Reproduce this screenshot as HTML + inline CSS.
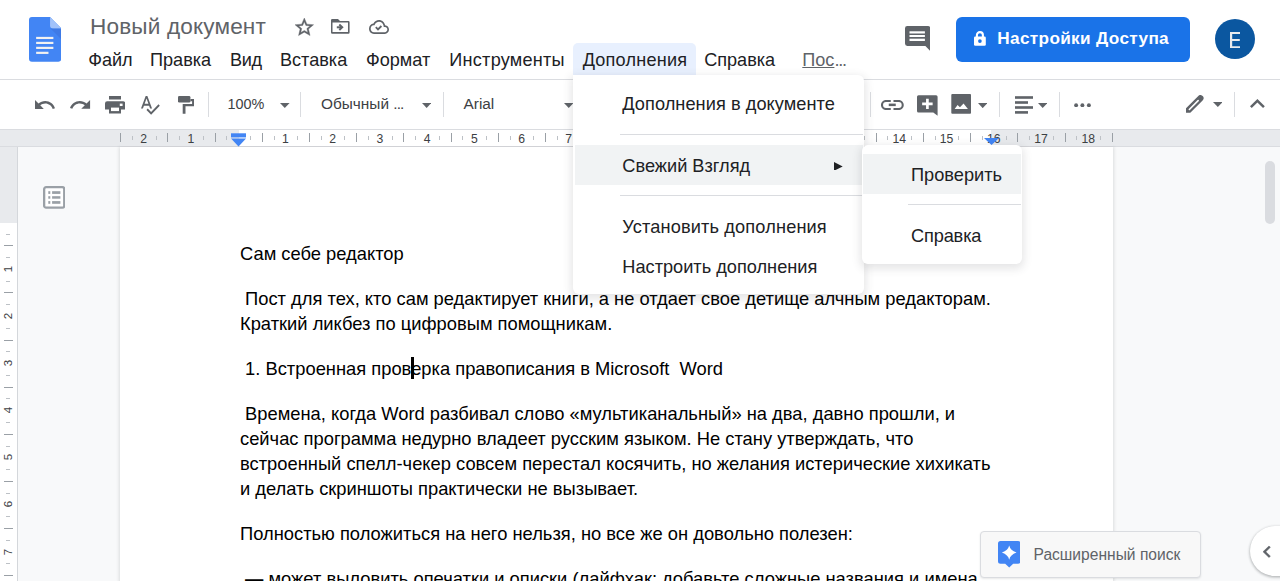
<!DOCTYPE html>
<html><head><meta charset="utf-8"><style>
html,body{margin:0;padding:0;width:1280px;height:581px;overflow:hidden;background:#fff;position:relative;font-family:"Liberation Sans",sans-serif}
</style></head><body>
<div style="position:absolute;left:0px;top:0px;width:1280px;height:79px;background:#fff;"></div>
<div style="position:absolute;left:0px;top:79px;width:1280px;height:1px;background:#dadce0;"></div>
<div style="position:absolute;left:0px;top:80px;width:1280px;height:49px;background:#fff;"></div>
<div style="position:absolute;left:0px;top:129px;width:1280px;height:1px;background:#dadce0;"></div>
<div style="position:absolute;left:0px;top:130px;width:1280px;height:16px;background:#e8eaed;"></div>
<div style="position:absolute;left:0px;top:146px;width:1280px;height:1px;background:#dadce0;"></div>
<div style="position:absolute;left:0px;top:147px;width:1280px;height:434px;background:#f8f9fa;"></div>
<div style="position:absolute;left:0px;top:147px;width:17px;height:76px;background:#e8eaed;"></div>
<div style="position:absolute;left:0px;top:223px;width:17px;height:358px;background:#fff;"></div>
<div style="position:absolute;left:17px;top:147px;width:1px;height:434px;background:#d4d7db;"></div>
<div style="position:absolute;left:120px;top:147px;width:993px;height:434px;background:#fff;box-shadow:0 1px 3px 1px rgba(60,64,67,.15)"></div>
<div style="position:absolute;left:120px;top:130px;width:119px;height:16px;background:#e8eaed;"></div>
<div style="position:absolute;left:239px;top:130px;width:752px;height:16px;background:#fff;"></div>
<div style="position:absolute;left:991px;top:130px;width:122px;height:16px;background:#e8eaed;"></div>
<div style="position:absolute;left:120px;top:133px;width:1px;height:9px;background:#9aa0a6;"></div>
<div style="position:absolute;left:132px;top:136px;width:1px;height:4px;background:#bdc1c6;"></div>
<div style="position:absolute;left:128.76px;top:132.3px;width:30px;text-align:center;font:400 12.2px/14px 'Liberation Sans',sans-serif;color:#3c4043">2</div>
<div style="position:absolute;left:156px;top:136px;width:1px;height:4px;background:#bdc1c6;"></div>
<div style="position:absolute;left:167px;top:133px;width:1px;height:9px;background:#9aa0a6;"></div>
<div style="position:absolute;left:179px;top:136px;width:1px;height:4px;background:#bdc1c6;"></div>
<div style="position:absolute;left:175.98px;top:132.3px;width:30px;text-align:center;font:400 12.2px/14px 'Liberation Sans',sans-serif;color:#3c4043">1</div>
<div style="position:absolute;left:203px;top:136px;width:1px;height:4px;background:#bdc1c6;"></div>
<div style="position:absolute;left:215px;top:133px;width:1px;height:9px;background:#9aa0a6;"></div>
<div style="position:absolute;left:226px;top:136px;width:1px;height:4px;background:#bdc1c6;"></div>
<div style="position:absolute;left:250px;top:136px;width:1px;height:4px;background:#bdc1c6;"></div>
<div style="position:absolute;left:262px;top:133px;width:1px;height:9px;background:#9aa0a6;"></div>
<div style="position:absolute;left:274px;top:136px;width:1px;height:4px;background:#bdc1c6;"></div>
<div style="position:absolute;left:270.42px;top:132.3px;width:30px;text-align:center;font:400 12.2px/14px 'Liberation Sans',sans-serif;color:#3c4043">1</div>
<div style="position:absolute;left:297px;top:136px;width:1px;height:4px;background:#bdc1c6;"></div>
<div style="position:absolute;left:309px;top:133px;width:1px;height:9px;background:#9aa0a6;"></div>
<div style="position:absolute;left:321px;top:136px;width:1px;height:4px;background:#bdc1c6;"></div>
<div style="position:absolute;left:317.64px;top:132.3px;width:30px;text-align:center;font:400 12.2px/14px 'Liberation Sans',sans-serif;color:#3c4043">2</div>
<div style="position:absolute;left:344px;top:136px;width:1px;height:4px;background:#bdc1c6;"></div>
<div style="position:absolute;left:356px;top:133px;width:1px;height:9px;background:#9aa0a6;"></div>
<div style="position:absolute;left:368px;top:136px;width:1px;height:4px;background:#bdc1c6;"></div>
<div style="position:absolute;left:364.86px;top:132.3px;width:30px;text-align:center;font:400 12.2px/14px 'Liberation Sans',sans-serif;color:#3c4043">3</div>
<div style="position:absolute;left:392px;top:136px;width:1px;height:4px;background:#bdc1c6;"></div>
<div style="position:absolute;left:403px;top:133px;width:1px;height:9px;background:#9aa0a6;"></div>
<div style="position:absolute;left:415px;top:136px;width:1px;height:4px;background:#bdc1c6;"></div>
<div style="position:absolute;left:412.08px;top:132.3px;width:30px;text-align:center;font:400 12.2px/14px 'Liberation Sans',sans-serif;color:#3c4043">4</div>
<div style="position:absolute;left:439px;top:136px;width:1px;height:4px;background:#bdc1c6;"></div>
<div style="position:absolute;left:451px;top:133px;width:1px;height:9px;background:#9aa0a6;"></div>
<div style="position:absolute;left:462px;top:136px;width:1px;height:4px;background:#bdc1c6;"></div>
<div style="position:absolute;left:459.30px;top:132.3px;width:30px;text-align:center;font:400 12.2px/14px 'Liberation Sans',sans-serif;color:#3c4043">5</div>
<div style="position:absolute;left:486px;top:136px;width:1px;height:4px;background:#bdc1c6;"></div>
<div style="position:absolute;left:498px;top:133px;width:1px;height:9px;background:#9aa0a6;"></div>
<div style="position:absolute;left:510px;top:136px;width:1px;height:4px;background:#bdc1c6;"></div>
<div style="position:absolute;left:506.52px;top:132.3px;width:30px;text-align:center;font:400 12.2px/14px 'Liberation Sans',sans-serif;color:#3c4043">6</div>
<div style="position:absolute;left:533px;top:136px;width:1px;height:4px;background:#bdc1c6;"></div>
<div style="position:absolute;left:545px;top:133px;width:1px;height:9px;background:#9aa0a6;"></div>
<div style="position:absolute;left:557px;top:136px;width:1px;height:4px;background:#bdc1c6;"></div>
<div style="position:absolute;left:553.74px;top:132.3px;width:30px;text-align:center;font:400 12.2px/14px 'Liberation Sans',sans-serif;color:#3c4043">7</div>
<div style="position:absolute;left:581px;top:136px;width:1px;height:4px;background:#bdc1c6;"></div>
<div style="position:absolute;left:592px;top:133px;width:1px;height:9px;background:#9aa0a6;"></div>
<div style="position:absolute;left:604px;top:136px;width:1px;height:4px;background:#bdc1c6;"></div>
<div style="position:absolute;left:600.96px;top:132.3px;width:30px;text-align:center;font:400 12.2px/14px 'Liberation Sans',sans-serif;color:#3c4043">8</div>
<div style="position:absolute;left:628px;top:136px;width:1px;height:4px;background:#bdc1c6;"></div>
<div style="position:absolute;left:640px;top:133px;width:1px;height:9px;background:#9aa0a6;"></div>
<div style="position:absolute;left:651px;top:136px;width:1px;height:4px;background:#bdc1c6;"></div>
<div style="position:absolute;left:648.18px;top:132.3px;width:30px;text-align:center;font:400 12.2px/14px 'Liberation Sans',sans-serif;color:#3c4043">9</div>
<div style="position:absolute;left:675px;top:136px;width:1px;height:4px;background:#bdc1c6;"></div>
<div style="position:absolute;left:687px;top:133px;width:1px;height:9px;background:#9aa0a6;"></div>
<div style="position:absolute;left:699px;top:136px;width:1px;height:4px;background:#bdc1c6;"></div>
<div style="position:absolute;left:695.40px;top:132.3px;width:30px;text-align:center;font:400 12.2px/14px 'Liberation Sans',sans-serif;color:#3c4043">10</div>
<div style="position:absolute;left:722px;top:136px;width:1px;height:4px;background:#bdc1c6;"></div>
<div style="position:absolute;left:734px;top:133px;width:1px;height:9px;background:#9aa0a6;"></div>
<div style="position:absolute;left:746px;top:136px;width:1px;height:4px;background:#bdc1c6;"></div>
<div style="position:absolute;left:742.62px;top:132.3px;width:30px;text-align:center;font:400 12.2px/14px 'Liberation Sans',sans-serif;color:#3c4043">11</div>
<div style="position:absolute;left:769px;top:136px;width:1px;height:4px;background:#bdc1c6;"></div>
<div style="position:absolute;left:781px;top:133px;width:1px;height:9px;background:#9aa0a6;"></div>
<div style="position:absolute;left:793px;top:136px;width:1px;height:4px;background:#bdc1c6;"></div>
<div style="position:absolute;left:789.84px;top:132.3px;width:30px;text-align:center;font:400 12.2px/14px 'Liberation Sans',sans-serif;color:#3c4043">12</div>
<div style="position:absolute;left:817px;top:136px;width:1px;height:4px;background:#bdc1c6;"></div>
<div style="position:absolute;left:828px;top:133px;width:1px;height:9px;background:#9aa0a6;"></div>
<div style="position:absolute;left:840px;top:136px;width:1px;height:4px;background:#bdc1c6;"></div>
<div style="position:absolute;left:837.06px;top:132.3px;width:30px;text-align:center;font:400 12.2px/14px 'Liberation Sans',sans-serif;color:#3c4043">13</div>
<div style="position:absolute;left:864px;top:136px;width:1px;height:4px;background:#bdc1c6;"></div>
<div style="position:absolute;left:876px;top:133px;width:1px;height:9px;background:#9aa0a6;"></div>
<div style="position:absolute;left:887px;top:136px;width:1px;height:4px;background:#bdc1c6;"></div>
<div style="position:absolute;left:884.28px;top:132.3px;width:30px;text-align:center;font:400 12.2px/14px 'Liberation Sans',sans-serif;color:#3c4043">14</div>
<div style="position:absolute;left:911px;top:136px;width:1px;height:4px;background:#bdc1c6;"></div>
<div style="position:absolute;left:923px;top:133px;width:1px;height:9px;background:#9aa0a6;"></div>
<div style="position:absolute;left:935px;top:136px;width:1px;height:4px;background:#bdc1c6;"></div>
<div style="position:absolute;left:931.50px;top:132.3px;width:30px;text-align:center;font:400 12.2px/14px 'Liberation Sans',sans-serif;color:#3c4043">15</div>
<div style="position:absolute;left:958px;top:136px;width:1px;height:4px;background:#bdc1c6;"></div>
<div style="position:absolute;left:970px;top:133px;width:1px;height:9px;background:#9aa0a6;"></div>
<div style="position:absolute;left:982px;top:136px;width:1px;height:4px;background:#bdc1c6;"></div>
<div style="position:absolute;left:978.72px;top:132.3px;width:30px;text-align:center;font:400 12.2px/14px 'Liberation Sans',sans-serif;color:#3c4043">16</div>
<div style="position:absolute;left:1006px;top:136px;width:1px;height:4px;background:#bdc1c6;"></div>
<div style="position:absolute;left:1017px;top:133px;width:1px;height:9px;background:#9aa0a6;"></div>
<div style="position:absolute;left:1029px;top:136px;width:1px;height:4px;background:#bdc1c6;"></div>
<div style="position:absolute;left:1025.94px;top:132.3px;width:30px;text-align:center;font:400 12.2px/14px 'Liberation Sans',sans-serif;color:#3c4043">17</div>
<div style="position:absolute;left:1053px;top:136px;width:1px;height:4px;background:#bdc1c6;"></div>
<div style="position:absolute;left:1065px;top:133px;width:1px;height:9px;background:#9aa0a6;"></div>
<div style="position:absolute;left:1076px;top:136px;width:1px;height:4px;background:#bdc1c6;"></div>
<div style="position:absolute;left:1073.16px;top:132.3px;width:30px;text-align:center;font:400 12.2px/14px 'Liberation Sans',sans-serif;color:#3c4043">18</div>
<div style="position:absolute;left:1100px;top:136px;width:1px;height:4px;background:#bdc1c6;"></div>
<div style="position:absolute;left:1112px;top:133px;width:1px;height:9px;background:#9aa0a6;"></div>
<div style="position:absolute;left:120px;top:134px;width:1px;height:8px;background:#9aa0a6;"></div>
<svg style="position:absolute;left:984px;top:138px;width:15px;height:8px" viewBox="0 0 15 8"><path d="M0 0h15L7.5 7z" fill="#4285f4"/></svg>
<svg style="position:absolute;left:231px;top:132.5px;width:15px;height:14px" viewBox="0 0 15 14"><rect x="0" y="0.3" width="15" height="4.1" fill="#4285f4"/><path d="M0 5.4h15L7.5 13.5z" fill="#4285f4"/></svg>
<div style="position:absolute;left:6px;top:234px;width:4px;height:1px;background:#bdc1c6;"></div>
<div style="position:absolute;left:4px;top:245px;width:9px;height:1px;background:#9aa0a6;"></div>
<div style="position:absolute;left:6px;top:257px;width:4px;height:1px;background:#bdc1c6;"></div>
<div style="position:absolute;left:1px;top:261.90px;width:14px;height:14px;text-align:center;font:400 11.5px/14px 'Liberation Sans',sans-serif;color:#3c4043;transform:rotate(-90deg)">1</div>
<div style="position:absolute;left:6px;top:281px;width:4px;height:1px;background:#bdc1c6;"></div>
<div style="position:absolute;left:4px;top:292px;width:9px;height:1px;background:#9aa0a6;"></div>
<div style="position:absolute;left:6px;top:304px;width:4px;height:1px;background:#bdc1c6;"></div>
<div style="position:absolute;left:1px;top:309.00px;width:14px;height:14px;text-align:center;font:400 11.5px/14px 'Liberation Sans',sans-serif;color:#3c4043;transform:rotate(-90deg)">2</div>
<div style="position:absolute;left:6px;top:328px;width:4px;height:1px;background:#bdc1c6;"></div>
<div style="position:absolute;left:4px;top:340px;width:9px;height:1px;background:#9aa0a6;"></div>
<div style="position:absolute;left:6px;top:351px;width:4px;height:1px;background:#bdc1c6;"></div>
<div style="position:absolute;left:1px;top:356.10px;width:14px;height:14px;text-align:center;font:400 11.5px/14px 'Liberation Sans',sans-serif;color:#3c4043;transform:rotate(-90deg)">3</div>
<div style="position:absolute;left:6px;top:375px;width:4px;height:1px;background:#bdc1c6;"></div>
<div style="position:absolute;left:4px;top:387px;width:9px;height:1px;background:#9aa0a6;"></div>
<div style="position:absolute;left:6px;top:398px;width:4px;height:1px;background:#bdc1c6;"></div>
<div style="position:absolute;left:1px;top:403.20px;width:14px;height:14px;text-align:center;font:400 11.5px/14px 'Liberation Sans',sans-serif;color:#3c4043;transform:rotate(-90deg)">4</div>
<div style="position:absolute;left:6px;top:422px;width:4px;height:1px;background:#bdc1c6;"></div>
<div style="position:absolute;left:4px;top:434px;width:9px;height:1px;background:#9aa0a6;"></div>
<div style="position:absolute;left:6px;top:446px;width:4px;height:1px;background:#bdc1c6;"></div>
<div style="position:absolute;left:1px;top:450.30px;width:14px;height:14px;text-align:center;font:400 11.5px/14px 'Liberation Sans',sans-serif;color:#3c4043;transform:rotate(-90deg)">5</div>
<div style="position:absolute;left:6px;top:469px;width:4px;height:1px;background:#bdc1c6;"></div>
<div style="position:absolute;left:4px;top:481px;width:9px;height:1px;background:#9aa0a6;"></div>
<div style="position:absolute;left:6px;top:493px;width:4px;height:1px;background:#bdc1c6;"></div>
<div style="position:absolute;left:1px;top:497.40px;width:14px;height:14px;text-align:center;font:400 11.5px/14px 'Liberation Sans',sans-serif;color:#3c4043;transform:rotate(-90deg)">6</div>
<div style="position:absolute;left:6px;top:516px;width:4px;height:1px;background:#bdc1c6;"></div>
<div style="position:absolute;left:4px;top:528px;width:9px;height:1px;background:#9aa0a6;"></div>
<div style="position:absolute;left:6px;top:540px;width:4px;height:1px;background:#bdc1c6;"></div>
<div style="position:absolute;left:1px;top:544.50px;width:14px;height:14px;text-align:center;font:400 11.5px/14px 'Liberation Sans',sans-serif;color:#3c4043;transform:rotate(-90deg)">7</div>
<div style="position:absolute;left:6px;top:563px;width:4px;height:1px;background:#bdc1c6;"></div>
<div style="position:absolute;left:4px;top:575px;width:9px;height:1px;background:#9aa0a6;"></div>
<svg style="position:absolute;left:29px;top:17px;width:32.3px;height:44.7px" viewBox="0 0 33 45" preserveAspectRatio="none">
<path d="M3 0h18.5L33 11.5V42a3 3 0 0 1-3 3H3a3 3 0 0 1-3-3V3a3 3 0 0 1 3-3z" fill="#4285f4"/>
<path d="M21.5 0L33 11.5H24.5a3 3 0 0 1-3-3z" fill="#a1c2fa"/>
<path d="M22 11.5L33 22.5V11.5z" fill="#3a6fd8" opacity=".5"/>
<rect x="7.3" y="20" width="17.6" height="2.2" fill="#f1f1f1"/>
<rect x="7.3" y="25" width="17.6" height="2.2" fill="#f1f1f1"/>
<rect x="7.3" y="30" width="17.6" height="2.2" fill="#f1f1f1"/>
<rect x="7.3" y="35" width="12.6" height="2.2" fill="#f1f1f1"/>
</svg>
<div style="position:absolute;left:90.00px;top:13.21px;font:400 22.6px/27.12px 'Liberation Sans',sans-serif;color:#5f6368;white-space:pre;letter-spacing:0.15px;">Новый документ</div>
<svg style="position:absolute;left:294.7px;top:17.5px;width:18.60px;height:17.60px;overflow:visible" viewBox="2 2 20 19" preserveAspectRatio="none"><path fill="#5f6368" stroke="#5f6368" stroke-width="0.4" d="M22 9.24l-7.19-.62L12 2 9.19 8.63 2 9.24l5.46 4.73L5.82 21 12 17.27 18.18 21l-1.63-7.03L22 9.24zM12 15.4l-3.76 2.27 1-4.28-3.32-2.88 4.38-.38L12 6.1l1.71 4.04 4.38.38-3.32 2.88 1 4.28L12 15.4z"/></svg>
<svg style="position:absolute;left:331.3px;top:18.9px;width:18.6px;height:14.7px" viewBox="0 0 18.6 14.7">
<path fill-rule="evenodd" fill="#5f6368" d="M1.2 0H7L9 2.1H17.4A1.2 1.2 0 0 1 18.6 3.3V13.5A1.2 1.2 0 0 1 17.4 14.7H1.2A1.2 1.2 0 0 1 0 13.5V1.2A1.2 1.2 0 0 1 1.2 0zM1.5 3.5V13.1H17V3.5z"/>
<rect x="5.8" y="7.3" width="4.6" height="2" fill="#5f6368"/>
<path d="M8.3 5.6L11.2 8.3L8.3 11" stroke="#5f6368" stroke-width="2" fill="none"/>
</svg>
<svg style="position:absolute;left:369px;top:19.5px;width:20.00px;height:13.90px;overflow:visible" viewBox="0 4 24 16" preserveAspectRatio="none"><path fill="#5f6368" d="M19.35 10.04C18.67 6.59 15.64 4 12 4 9.11 4 6.6 5.64 5.35 8.04 2.34 8.36 0 10.91 0 14c0 3.31 2.69 6 6 6h13c2.76 0 5-2.24 5-5 0-2.64-2.05-4.78-4.65-4.96zM19 18H6c-2.21 0-4-1.79-4-4 0-2.05 1.53-3.76 3.56-3.97l1.07-.11.5-.95C8.08 7.14 9.94 6 12 6c2.62 0 4.88 1.86 5.39 4.43l.3 1.5 1.53.11c1.56.1 2.78 1.41 2.78 2.96 0 1.65-1.35 3-3 3z"/></svg>
<svg style="position:absolute;left:366px;top:16px;width:26px;height:20px" viewBox="0 0 26 20"><path d="M9.8 11.2L12 13.4L15.4 10" stroke="#5f6368" stroke-width="1.8" fill="none"/></svg>
<div style="position:absolute;left:573px;top:43px;width:123px;height:32px;background:#e8f0fe;border-radius:5px 5px 0 0"></div>
<div style="position:absolute;left:88.20px;top:50.07px;font:400 18.1px/21.72px 'Liberation Sans',sans-serif;color:#202124;white-space:pre;letter-spacing:0px;">Файл</div>
<div style="position:absolute;left:150.00px;top:50.07px;font:400 18.1px/21.72px 'Liberation Sans',sans-serif;color:#202124;white-space:pre;letter-spacing:0px;">Правка</div>
<div style="position:absolute;left:230.00px;top:50.07px;font:400 18.1px/21.72px 'Liberation Sans',sans-serif;color:#202124;white-space:pre;letter-spacing:-0.4px;">Вид</div>
<div style="position:absolute;left:280.00px;top:50.07px;font:400 18.1px/21.72px 'Liberation Sans',sans-serif;color:#202124;white-space:pre;letter-spacing:0px;">Вставка</div>
<div style="position:absolute;left:365.90px;top:50.07px;font:400 18.1px/21.72px 'Liberation Sans',sans-serif;color:#202124;white-space:pre;letter-spacing:0px;">Формат</div>
<div style="position:absolute;left:449.30px;top:50.07px;font:400 18.1px/21.72px 'Liberation Sans',sans-serif;color:#202124;white-space:pre;letter-spacing:0.25px;">Инструменты</div>
<div style="position:absolute;left:582.70px;top:50.07px;font:400 18.1px/21.72px 'Liberation Sans',sans-serif;color:#202124;white-space:pre;letter-spacing:0.2px;">Дополнения</div>
<div style="position:absolute;left:704.20px;top:50.07px;font:400 18.1px/21.72px 'Liberation Sans',sans-serif;color:#202124;white-space:pre;letter-spacing:0px;">Справка</div>
<div style="position:absolute;left:802.30px;top:50.07px;font:400 18.1px/21.72px 'Liberation Sans',sans-serif;color:#5f6368;white-space:pre;"><span style="text-decoration:underline">Пос</span><span style="letter-spacing:-1.2px">...</span></div>
<svg style="position:absolute;left:904.6px;top:25.8px;width:25.3px;height:25.2px" viewBox="0 0 25.3 25.2">
<path d="M2.3 0h20.7a2.3 2.3 0 0 1 2.3 2.3V25.1L20.4 19.9H2.3A2.3 2.3 0 0 1 0 17.6V2.3A2.3 2.3 0 0 1 2.3 0z" fill="#5f6368"/>
<rect x="4.5" y="5.3" width="15.4" height="2.2" fill="#fff"/><rect x="4.5" y="9.0" width="15.4" height="2.0" fill="#fff"/><rect x="4.5" y="12.7" width="15.4" height="2.3" fill="#fff"/>
</svg>
<div style="position:absolute;left:956px;top:17px;width:234px;height:44.5px;background:#1a73e8;border-radius:6px"></div>
<svg style="position:absolute;left:974.2px;top:31px;width:11.8px;height:14.8px" viewBox="0 0 11.8 14.8">
<rect x="0" y="5.6" width="11.8" height="9.2" rx="1.3" fill="#fff"/>
<path d="M2.9 6.2V4.1A3 3 0 0 1 8.9 4.1V6.2" stroke="#fff" stroke-width="2.1" fill="none"/>
<circle cx="5.9" cy="10.1" r="1.85" fill="#1a73e8"/>
</svg>
<div style="position:absolute;left:997.30px;top:28.32px;font:700 17.2px/20.64px 'Liberation Sans',sans-serif;color:#fff;white-space:pre;letter-spacing:0.33px;">Настройки Доступа</div>
<div style="position:absolute;left:1215px;top:19px;width:40px;height:40px;border-radius:50%;background:#0b57a0"></div>
<svg style="position:absolute;left:1230px;top:31.7px;width:10.4px;height:16.3px" viewBox="0 0 10.4 16.3"><path fill="#e8eaed" d="M0 0H10.4V2.1H2.2V7.1H9.8V9.1H2.2V14.2H10.4V16.3H0z"/></svg>
<svg style="position:absolute;left:34.8px;top:99.8px;width:20.00px;height:8.95px;overflow:visible" viewBox="2 7 20.470001220703125 9" preserveAspectRatio="none"><path fill="#5f6368" d="M12.5 8c-2.65 0-5.05.99-6.9 2.6L2 7v9h9l-3.62-3.62c1.39-1.16 3.16-1.88 5.12-1.88 3.54 0 6.55 2.31 7.6 5.5l2.37-.78C21.08 11.03 17.15 8 12.5 8z"/></svg>
<svg style="position:absolute;left:70.2px;top:100.3px;width:20.10px;height:8.70px;overflow:visible" viewBox="1.5399999618530273 7 20.459999084472656 9" preserveAspectRatio="none"><path fill="#5f6368" d="M18.4 10.6C16.55 8.99 14.15 8 11.5 8c-4.65 0-8.58 3.03-9.96 7.22L3.9 16c1.05-3.19 4.05-5.5 7.6-5.5 1.95 0 3.73.72 5.12 1.88L13 16h9V7l-3.6 3.6z"/></svg>
<svg style="position:absolute;left:105px;top:96.4px;width:20.2px;height:17.4px" viewBox="0 0 20.2 17.4">
<rect x="4" y="0" width="12" height="3.5" fill="#5f6368"/>
<path d="M2.2 5.2H18A2.2 2.2 0 0 1 20.2 7.4V13.6H16V17.4H4V13.6H0V7.4A2.2 2.2 0 0 1 2.2 5.2z" fill="#5f6368"/>
<rect x="6" y="11.6" width="8" height="3.5" fill="#fff"/>
<rect x="14.8" y="7.6" width="2.8" height="2.4" fill="#fff"/>
</svg>
<svg style="position:absolute;left:141.1px;top:96.1px;width:18.80px;height:18.80px;overflow:visible" viewBox="2.4600000381469727 3 20.540000915527344 19.5" preserveAspectRatio="none"><path fill="#5f6368" d="M12.45 16h2.09L9.43 3H7.57L2.46 16h2.09l1.12-3h5.64l1.14 3zm-6.02-5L8.5 5.48 10.57 11H6.43zm15.16.59l-8.09 8.09L9.83 16l-1.41 1.41 5.09 5.09L23 13l-1.41-1.41z"/></svg>
<svg style="position:absolute;left:177.5px;top:96.25px;width:16.4px;height:17.65px" viewBox="0 0 16.4 17.65">
<rect x="0" y="0" width="12.4" height="6.55" rx="1.3" fill="#5f6368"/>
<path d="M12.4 3H16.4V10.35H7.5V17.65H4.7V8H14.1V5.2H12.4z" fill="#5f6368"/>
</svg>
<div style="position:absolute;left:208px;top:92px;width:1px;height:25px;background:#dadce0;"></div>
<div style="position:absolute;left:300px;top:92px;width:1px;height:25px;background:#dadce0;"></div>
<div style="position:absolute;left:443px;top:92px;width:1px;height:25px;background:#dadce0;"></div>
<div style="position:absolute;left:869.5px;top:92px;width:1.0px;height:25px;background:#dadce0;"></div>
<div style="position:absolute;left:999px;top:92px;width:1px;height:25px;background:#dadce0;"></div>
<div style="position:absolute;left:1059px;top:92px;width:1px;height:25px;background:#dadce0;"></div>
<div style="position:absolute;left:1234px;top:92px;width:1px;height:25px;background:#dadce0;"></div>
<div style="position:absolute;left:227.50px;top:95.67px;font:400 14.4px/17.28px 'Liberation Sans',sans-serif;color:#3c4043;white-space:pre;">100%</div>
<svg style="position:absolute;left:280px;top:103px;width:9.60px;height:5.00px" viewBox="0 0 10 5" preserveAspectRatio="none"><path fill="#5f6368" d="M0 0h10L5 5z"/></svg>
<div style="position:absolute;left:321.00px;top:95.12px;font:400 15.4px/18.48px 'Liberation Sans',sans-serif;color:#3c4043;white-space:pre;">Обычный <span style="letter-spacing:-0.9px">...</span></div>
<svg style="position:absolute;left:422px;top:103px;width:9.30px;height:5.00px" viewBox="0 0 10 5" preserveAspectRatio="none"><path fill="#5f6368" d="M0 0h10L5 5z"/></svg>
<div style="position:absolute;left:463.50px;top:95.12px;font:400 15.4px/18.48px 'Liberation Sans',sans-serif;color:#3c4043;white-space:pre;">Arial</div>
<svg style="position:absolute;left:564px;top:103px;width:9.50px;height:5.00px" viewBox="0 0 10 5" preserveAspectRatio="none"><path fill="#5f6368" d="M0 0h10L5 5z"/></svg>
<svg style="position:absolute;left:881px;top:99.75px;width:22.75px;height:10px" viewBox="0 0 22.75 10">
<path d="M9.75 1H5A4 4 0 0 0 5 9H9.75M12.5 1H17.75A4 4 0 0 1 17.75 9H12.5" stroke="#5f6368" stroke-width="2.1" fill="none"/>
<rect x="7.75" y="3.6" width="7" height="2.5" fill="#5f6368"/>
</svg>
<svg style="position:absolute;left:917.2px;top:95.1px;width:20.6px;height:20.7px" viewBox="0 0 20.6 20.7">
<path d="M1.5 0.15h17.6a1.5 1.5 0 0 1 1.5 1.5V20.65L16.3 17.4H1.5A1.5 1.5 0 0 1 0 15.9V1.65A1.5 1.5 0 0 1 1.5 0.15z" fill="#5f6368"/>
<path d="M9.05 3.7h2.7v3.75h3.9v2.7h-3.9v3.75H9.05v-3.75H5.15v-2.7h3.9z" fill="#fff"/>
</svg>
<svg style="position:absolute;left:951.25px;top:94.1px;width:20.2px;height:19.8px" viewBox="0 0 20.2 19.8">
<rect x="0.3" y="0" width="19.8" height="19.8" rx="1" fill="#5f6368"/>
<path d="M3.65 14.95L6.55 10.9L8.95 13.25L12.55 9.4L16.95 14.95z" fill="#fff"/>
</svg>
<svg style="position:absolute;left:977.9px;top:103px;width:9.40px;height:5.10px" viewBox="0 0 10 5" preserveAspectRatio="none"><path fill="#5f6368" d="M0 0h10L5 5z"/></svg>
<svg style="position:absolute;left:1015px;top:96px;width:18px;height:18px" viewBox="0 0 18 18">
<rect x="0" y="0.2" width="18" height="2.6" fill="#5f6368"/><rect x="0" y="5.2" width="13" height="2.6" fill="#5f6368"/>
<rect x="0" y="10.2" width="18" height="2.6" fill="#5f6368"/><rect x="0" y="15.1" width="13" height="2.6" fill="#5f6368"/>
</svg>
<svg style="position:absolute;left:1037.9px;top:103px;width:9.40px;height:4.90px" viewBox="0 0 10 5" preserveAspectRatio="none"><path fill="#5f6368" d="M0 0h10L5 5z"/></svg>
<svg style="position:absolute;left:1074px;top:102.5px;width:17px;height:4.5px" viewBox="0 0 17 4.5">
<circle cx="2.1" cy="2.3" r="1.95" fill="#5f6368"/><circle cx="8.4" cy="2.3" r="1.95" fill="#5f6368"/><circle cx="14.9" cy="2.3" r="1.95" fill="#5f6368"/>
</svg>
<svg style="position:absolute;left:1186.2px;top:95px;width:18px;height:18px" viewBox="0 0 18 18">
<path fill="#5f6368" d="M0 17.8V13.2L12.3 0.9A3.15 3.15 0 0 1 16.6 5.5L4.3 17.8Z"/>
<path d="M3.35 14.45L12.15 5.65" stroke="#fff" stroke-width="1.6" stroke-linecap="round"/>
</svg>
<svg style="position:absolute;left:1212.7px;top:102px;width:9.70px;height:5.00px" viewBox="0 0 10 5" preserveAspectRatio="none"><path fill="#5f6368" d="M0 0h10L5 5z"/></svg>
<svg style="position:absolute;left:1250px;top:99.1px;width:14.80px;height:9.00px;overflow:visible" viewBox="6 8 12 7.409999847412109" preserveAspectRatio="none"><path fill="#5f6368" d="M12 8l-6 6 1.41 1.41L12 10.83l4.59 4.58L18 14z"/></svg>
<svg style="position:absolute;left:42.7px;top:185.9px;width:22.4px;height:22.8px" viewBox="0 0 22.4 22.8">
<rect x="1.15" y="1.15" width="20.1" height="20.5" rx="2" fill="#fff" stroke="#9aa0a6" stroke-width="2.3"/>
<rect x="5.3" y="5.2" width="2" height="2.7" fill="#9aa0a6"/><rect x="9.1" y="5.2" width="8.3" height="2.7" fill="#9aa0a6"/>
<rect x="5.3" y="10.2" width="2" height="2.5" fill="#9aa0a6"/><rect x="9.1" y="10.2" width="8.3" height="2.5" fill="#9aa0a6"/>
<rect x="5.3" y="15.1" width="2" height="2.7" fill="#9aa0a6"/><rect x="9.1" y="15.1" width="8.3" height="2.7" fill="#9aa0a6"/>
</svg>
<div style="position:absolute;left:240.00px;top:243.15px;font:400 18.33px/22.00px 'Liberation Sans',sans-serif;color:#000;white-space:pre;">Сам себе редактор</div>
<div style="position:absolute;left:240.00px;top:288.15px;font:400 18.33px/22.00px 'Liberation Sans',sans-serif;color:#000;white-space:pre;"> Пост для тех, кто сам редактирует книги, а не отдает свое детище алчным редакторам.</div>
<div style="position:absolute;left:240.00px;top:313.15px;font:400 18.33px/22.00px 'Liberation Sans',sans-serif;color:#000;white-space:pre;">Краткий ликбез по цифровым помощникам.</div>
<div style="position:absolute;left:240.00px;top:358.15px;font:400 18.33px/22.00px 'Liberation Sans',sans-serif;color:#000;white-space:pre;"> 1. Встроенная проверка правописания в Microsoft  Word</div>
<div style="position:absolute;left:240.00px;top:403.15px;font:400 18.33px/22.00px 'Liberation Sans',sans-serif;color:#000;white-space:pre;"> Времена, когда Word разбивал слово «мультиканальный» на два, давно прошли, и</div>
<div style="position:absolute;left:240.00px;top:428.15px;font:400 18.33px/22.00px 'Liberation Sans',sans-serif;color:#000;white-space:pre;">сейчас программа недурно владеет русским языком. Не стану утверждать, что</div>
<div style="position:absolute;left:240.00px;top:453.15px;font:400 18.33px/22.00px 'Liberation Sans',sans-serif;color:#000;white-space:pre;">встроенный спелл-чекер совсем перестал косячить, но желания истерические хихикать</div>
<div style="position:absolute;left:240.00px;top:478.15px;font:400 18.33px/22.00px 'Liberation Sans',sans-serif;color:#000;white-space:pre;">и делать скриншоты практически не вызывает.</div>
<div style="position:absolute;left:240.00px;top:523.15px;font:400 18.33px/22.00px 'Liberation Sans',sans-serif;color:#000;white-space:pre;">Полностью положиться на него нельзя, но все же он довольно полезен:</div>
<div style="position:absolute;left:240.00px;top:568.15px;font:400 18.33px/22.00px 'Liberation Sans',sans-serif;color:#000;white-space:pre;"> <b>—</b> может выловить опечатки и описки (лайфхак: добавьте сложные названия и имена</div>
<div style="position:absolute;left:411.3px;top:357px;width:2.6999999999999886px;height:22px;background:#000;"></div>
<div style="position:absolute;left:1265px;top:161.3px;width:10.200000000000045px;height:63.0px;background:#dadce0;border-radius:5px"></div>
<div style="position:absolute;left:980px;top:531px;height:46.5px;background:#f8f8f8;border:1px solid #dadce0;border-radius:4px;box-sizing:border-box;width:220.5px;box-shadow:0 1px 2px rgba(60,64,67,.12)"></div>
<svg style="position:absolute;left:997.8px;top:541px;width:22.5px;height:26.5px" viewBox="0 0 22.5 26.5">
<path d="M2.5 0h17.5a2.5 2.5 0 0 1 2.5 2.5V20.2a2.5 2.5 0 0 1-2.5 2.5H15.2L11.2 26.5L7.2 22.7H2.5A2.5 2.5 0 0 1 0 20.2V2.5A2.5 2.5 0 0 1 2.5 0z" fill="#4285f4"/>
<path d="M11.2 4.4Q12.3 9.3 18.5 11.5Q12.3 13.7 11.2 18.7Q10.1 13.7 3.9 11.5Q10.1 9.3 11.2 4.4z" fill="#fff"/>
</svg>
<div style="position:absolute;left:1033.50px;top:545.63px;font:400 15.6px/18.72px 'Liberation Sans',sans-serif;color:#5f6368;white-space:pre;">Расширенный поиск</div>
<div style="position:absolute;left:1250px;top:526px;width:80px;height:50px;border-radius:25px;background:#fff;box-shadow:0 1px 3px 0 rgba(60,64,67,.3),0 1px 2px 1px rgba(60,64,67,.1)"></div>
<svg style="position:absolute;left:1263.4px;top:545.7px;width:7.40px;height:11.50px;overflow:visible" viewBox="8 6 7.409999847412109 12" preserveAspectRatio="none"><path fill="#5f6368" stroke="#5f6368" stroke-width="0.5" d="M15.41 7.41L14 6l-6 6 6 6 1.41-1.41L10.83 12z"/></svg>
<div style="position:absolute;left:573px;top:74.5px;width:290.8px;height:219.5px;background:#fff;border-radius:0 6px 6px 6px;box-shadow:0 3px 9px 2px rgba(60,64,67,.13)"></div>
<div style="position:absolute;left:622.30px;top:94.07px;font:400 18.2px/21.84px 'Liberation Sans',sans-serif;color:#202124;white-space:pre;letter-spacing:0.05px;">Дополнения в документе</div>
<div style="position:absolute;left:620px;top:134px;width:243px;height:1px;background:#dadce0;"></div>
<div style="position:absolute;left:575px;top:144.7px;width:288px;height:40.0px;background:#f1f3f4;"></div>
<div style="position:absolute;left:622.30px;top:155.87px;font:400 18.2px/21.84px 'Liberation Sans',sans-serif;color:#202124;white-space:pre;">Свежий Взгляд</div>
<svg style="position:absolute;left:834px;top:161.7px;width:8.7px;height:8.8px" viewBox="0 0 8.7 8.8"><path d="M0 0L8.7 4.4L0 8.8z" fill="#202124"/></svg>
<div style="position:absolute;left:620px;top:195px;width:243px;height:1px;background:#dadce0;"></div>
<div style="position:absolute;left:622.30px;top:216.87px;font:400 18.2px/21.84px 'Liberation Sans',sans-serif;color:#202124;white-space:pre;letter-spacing:0.14px;">Установить дополнения</div>
<div style="position:absolute;left:622.30px;top:256.87px;font:400 18.2px/21.84px 'Liberation Sans',sans-serif;color:#202124;white-space:pre;">Настроить дополнения</div>
<div style="position:absolute;left:862px;top:145px;width:160px;height:118.8px;background:#fff;border-radius:6px;box-shadow:0 3px 9px 2px rgba(60,64,67,.13)"></div>
<div style="position:absolute;left:863px;top:153.8px;width:158px;height:40.19999999999999px;background:#f1f3f4;"></div>
<div style="position:absolute;left:911.00px;top:164.57px;font:400 18.2px/21.84px 'Liberation Sans',sans-serif;color:#202124;white-space:pre;">Проверить</div>
<div style="position:absolute;left:908px;top:204px;width:113px;height:1px;background:#dadce0;"></div>
<div style="position:absolute;left:911.00px;top:225.87px;font:400 18.2px/21.84px 'Liberation Sans',sans-serif;color:#202124;white-space:pre;letter-spacing:-0.15px;">Справка</div>
</body></html>
